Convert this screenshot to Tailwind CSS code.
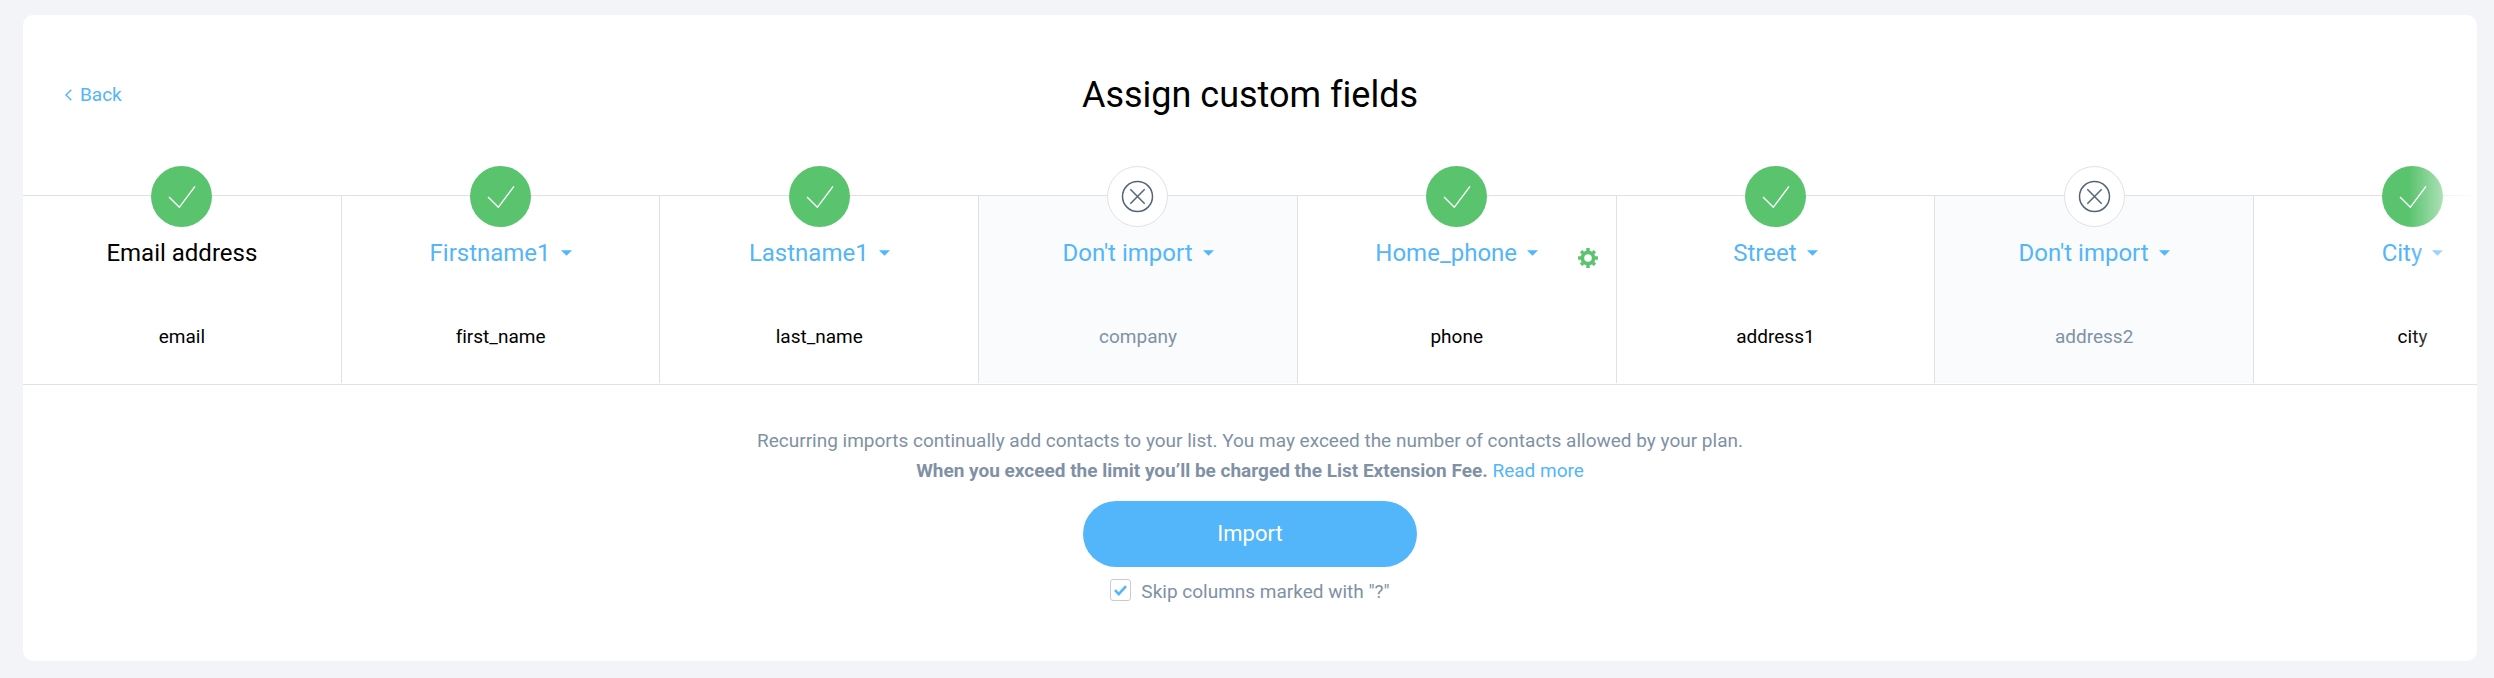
<!DOCTYPE html>
<html lang="en">
<head>
    <meta charset="UTF-8">
    <meta name="viewport" content="width=device-width, initial-scale=1.0">
    <title>Assign custom fields</title>
    <script src="https://cdn.jsdelivr.net/npm/@tailwindcss/browser@4"></script>
</head>
<body class="bg-[#f2f4f8] font-[Roboto,sans-serif] [font-variant-ligatures:none] text-black pt-[15px] pr-[17px] pb-[17px] pl-[23px]">

    <!-- Shared icons -->
    <svg class="hidden" aria-hidden="true">
        <symbol id="icon-check" viewBox="0 0 61 61">
            <circle cx="30.5" cy="30.5" r="30.5" fill="#5ac36e"/>
            <path d="M18 31l10.3 10.3L44 20.3" fill="none" stroke="#fff" stroke-width="1.4"/>
        </symbol>
        <symbol id="icon-skip" viewBox="0 0 61 61">
            <circle cx="30.5" cy="30.5" r="30" fill="#fff" stroke="#e0e1e3"/>
            <circle cx="30.5" cy="30.5" r="15" fill="none" stroke="#55647a" stroke-width="1.5"/>
            <path d="M23.3 23.3l14.4 14.4M37.7 23.3L23.3 37.7" fill="none" stroke="#55647a" stroke-width="1.5"/>
        </symbol>
        <symbol id="icon-caret" viewBox="0 0 11 6">
            <path d="M0 .3h11L5.5 5.8z" fill="#53b5fa"/>
        </symbol>
    </svg>

    <main class="bg-white rounded-[10px]">
        <!-- Header -->
        <header class="grid grid-cols-[1fr_auto_1fr] items-center pt-[60px] pb-[50px] px-[42px]">
            <a href="#" class="flex items-center gap-[8px] justify-self-start text-[19px] leading-[30px] text-[#53b5fa]">
                <svg class="w-[7px] h-[12px]" viewBox="0 0 7 12" fill="none" stroke="currentColor" stroke-width="1.4"><path d="M6.3 .7L1 6l5.3 5.3"/></svg>
                Back
            </a>
            <h1 class="text-[36px] leading-[40px]">Assign custom fields</h1>
        </header>

        <!-- Column mapping -->
        <section class="relative grid grid-cols-[repeat(7,1fr)_223px] overflow-hidden pt-[30px] pb-px border-b border-[#e0e1e3]">
            <div class="flex flex-col items-center border-t border-r border-[#e0e1e3] pb-8">
                <svg class="size-[61px] -mt-[30px]"><use href="#icon-check"/></svg>
                <div class="mt-[10px] text-[24px] leading-[32px]">Email address</div>
                <div class="mt-[54px] text-[19px] leading-[28px]">email</div>
            </div>
            <div class="flex flex-col items-center border-t border-r border-[#e0e1e3] pb-8">
                <svg class="size-[61px] -mt-[30px]"><use href="#icon-check"/></svg>
                <div class="mt-[10px] flex items-center gap-[10px]">
                    <select aria-label="Field for first_name" class="appearance-none field-sizing-content text-[24px] leading-[32px] text-[#53b5fa]">
                        <option>Firstname1</option>
                    </select>
                    <svg class="w-[11px] h-[6px] pointer-events-none"><use href="#icon-caret"/></svg>
                </div>
                <div class="mt-[54px] text-[19px] leading-[28px]">first_name</div>
            </div>
            <div class="flex flex-col items-center border-t border-r border-[#e0e1e3] pb-8">
                <svg class="size-[61px] -mt-[30px]"><use href="#icon-check"/></svg>
                <div class="mt-[10px] flex items-center gap-[10px]">
                    <select aria-label="Field for last_name" class="appearance-none field-sizing-content text-[24px] leading-[32px] text-[#53b5fa]">
                        <option>Lastname1</option>
                    </select>
                    <svg class="w-[11px] h-[6px] pointer-events-none"><use href="#icon-caret"/></svg>
                </div>
                <div class="mt-[54px] text-[19px] leading-[28px]">last_name</div>
            </div>
            <div class="flex flex-col items-center border-t border-r border-[#e0e1e3] bg-[#f9fbfd] pb-8">
                <svg class="size-[61px] -mt-[30px]"><use href="#icon-skip"/></svg>
                <div class="mt-[10px] flex items-center gap-[10px]">
                    <select aria-label="Field for company" class="appearance-none field-sizing-content text-[24px] leading-[32px] text-[#53b5fa]">
                        <option>Don't import</option>
                    </select>
                    <svg class="w-[11px] h-[6px] pointer-events-none"><use href="#icon-caret"/></svg>
                </div>
                <div class="mt-[54px] text-[19px] leading-[28px] text-[#8091a5]">company</div>
            </div>
            <div class="relative flex flex-col items-center border-t border-r border-[#e0e1e3] pb-8">
                <svg class="size-[61px] -mt-[30px]"><use href="#icon-check"/></svg>
                <div class="mt-[10px] flex items-center gap-[10px]">
                    <select aria-label="Field for phone" class="appearance-none field-sizing-content text-[24px] leading-[32px] text-[#53b5fa]">
                        <option>Home_phone</option>
                    </select>
                    <svg class="w-[11px] h-[6px] pointer-events-none"><use href="#icon-caret"/></svg>
                </div>
                <button type="button" aria-label="Phone settings" class="absolute right-[18px] top-[52px]">
                    <svg class="size-[20px]" viewBox="-10 -10 20 20" fill="none" stroke="#5ac36e">
                        <circle r="5.6" stroke-width="3.6"/>
                        <path stroke-width="3.4" d="M0-9.9v3M0 9.9v-3M-9.9 0h3M9.9 0h-3M-6.9-6.9l2 2M6.9 6.9l-2-2M-6.9 6.9l2-2M6.9-6.9l-2 2"/>
                    </svg>
                </button>
                <div class="mt-[54px] text-[19px] leading-[28px]">phone</div>
            </div>
            <div class="flex flex-col items-center border-t border-r border-[#e0e1e3] pb-8">
                <svg class="size-[61px] -mt-[30px]"><use href="#icon-check"/></svg>
                <div class="mt-[10px] flex items-center gap-[10px]">
                    <select aria-label="Field for address1" class="appearance-none field-sizing-content text-[24px] leading-[32px] text-[#53b5fa]">
                        <option>Street</option>
                    </select>
                    <svg class="w-[11px] h-[6px] pointer-events-none"><use href="#icon-caret"/></svg>
                </div>
                <div class="mt-[54px] text-[19px] leading-[28px]">address1</div>
            </div>
            <div class="flex flex-col items-center border-t border-r border-[#e0e1e3] bg-[#f9fbfd] pb-8">
                <svg class="size-[61px] -mt-[30px]"><use href="#icon-skip"/></svg>
                <div class="mt-[10px] flex items-center gap-[10px]">
                    <select aria-label="Field for address2" class="appearance-none field-sizing-content text-[24px] leading-[32px] text-[#53b5fa]">
                        <option>Don't import</option>
                    </select>
                    <svg class="w-[11px] h-[6px] pointer-events-none"><use href="#icon-caret"/></svg>
                </div>
                <div class="mt-[54px] text-[19px] leading-[28px] text-[#8091a5]">address2</div>
            </div>
            <!-- Last column runs off the edge of the card -->
            <div class="w-[317px] flex flex-col items-center border-t border-[#e0e1e3] pb-8">
                <svg class="size-[61px] -mt-[30px]"><use href="#icon-check"/></svg>
                <div class="mt-[10px] flex items-center gap-[10px]">
                    <select aria-label="Field for city" class="appearance-none field-sizing-content text-[24px] leading-[32px] text-[#53b5fa]">
                        <option>City</option>
                    </select>
                    <svg class="w-[11px] h-[6px] pointer-events-none"><use href="#icon-caret"/></svg>
                </div>
                <div class="mt-[54px] text-[19px] leading-[28px]">city</div>
            </div>
            <div class="absolute inset-y-0 right-0 w-[68px] bg-linear-to-r from-white/0 to-white pointer-events-none"></div>
        </section>

        <!-- Import -->
        <form class="flex flex-col items-center pt-[41px] pb-[54px] text-[19px] leading-[30px] text-[#8091a5]">
            <p class="text-center">
                Recurring imports continually add contacts to your list. You may exceed the number of contacts allowed by your plan.<br>
                <strong class="font-bold">When you exceed the limit you’ll be charged the List Extension Fee.</strong>
                <a href="#" class="text-[#53b5fa]">Read more</a>
            </p>
            <button type="submit" class="mt-[15px] w-[334px] h-[66px] rounded-full bg-[#53b5fa] text-[22px] text-white">Import</button>
            <label class="mt-[10px] flex items-start gap-[10px]">
                <span class="grid mt-[2px]">
                    <input type="checkbox" checked class="peer col-start-1 row-start-1 appearance-none w-[21px] h-[22px] rounded-[3px] border border-[#c8cacd] bg-white">
                    <svg class="col-start-1 row-start-1 place-self-center w-[13px] h-[11px] invisible peer-checked:visible pointer-events-none" viewBox="0 0 13 11" fill="none" stroke="#53b5fa" stroke-width="2.6"><path d="M1 5.2l3.8 3.9L12 1.2"/></svg>
                </span>
                Skip columns marked with "?"
            </label>
        </form>
    </main>

</body>
</html>
